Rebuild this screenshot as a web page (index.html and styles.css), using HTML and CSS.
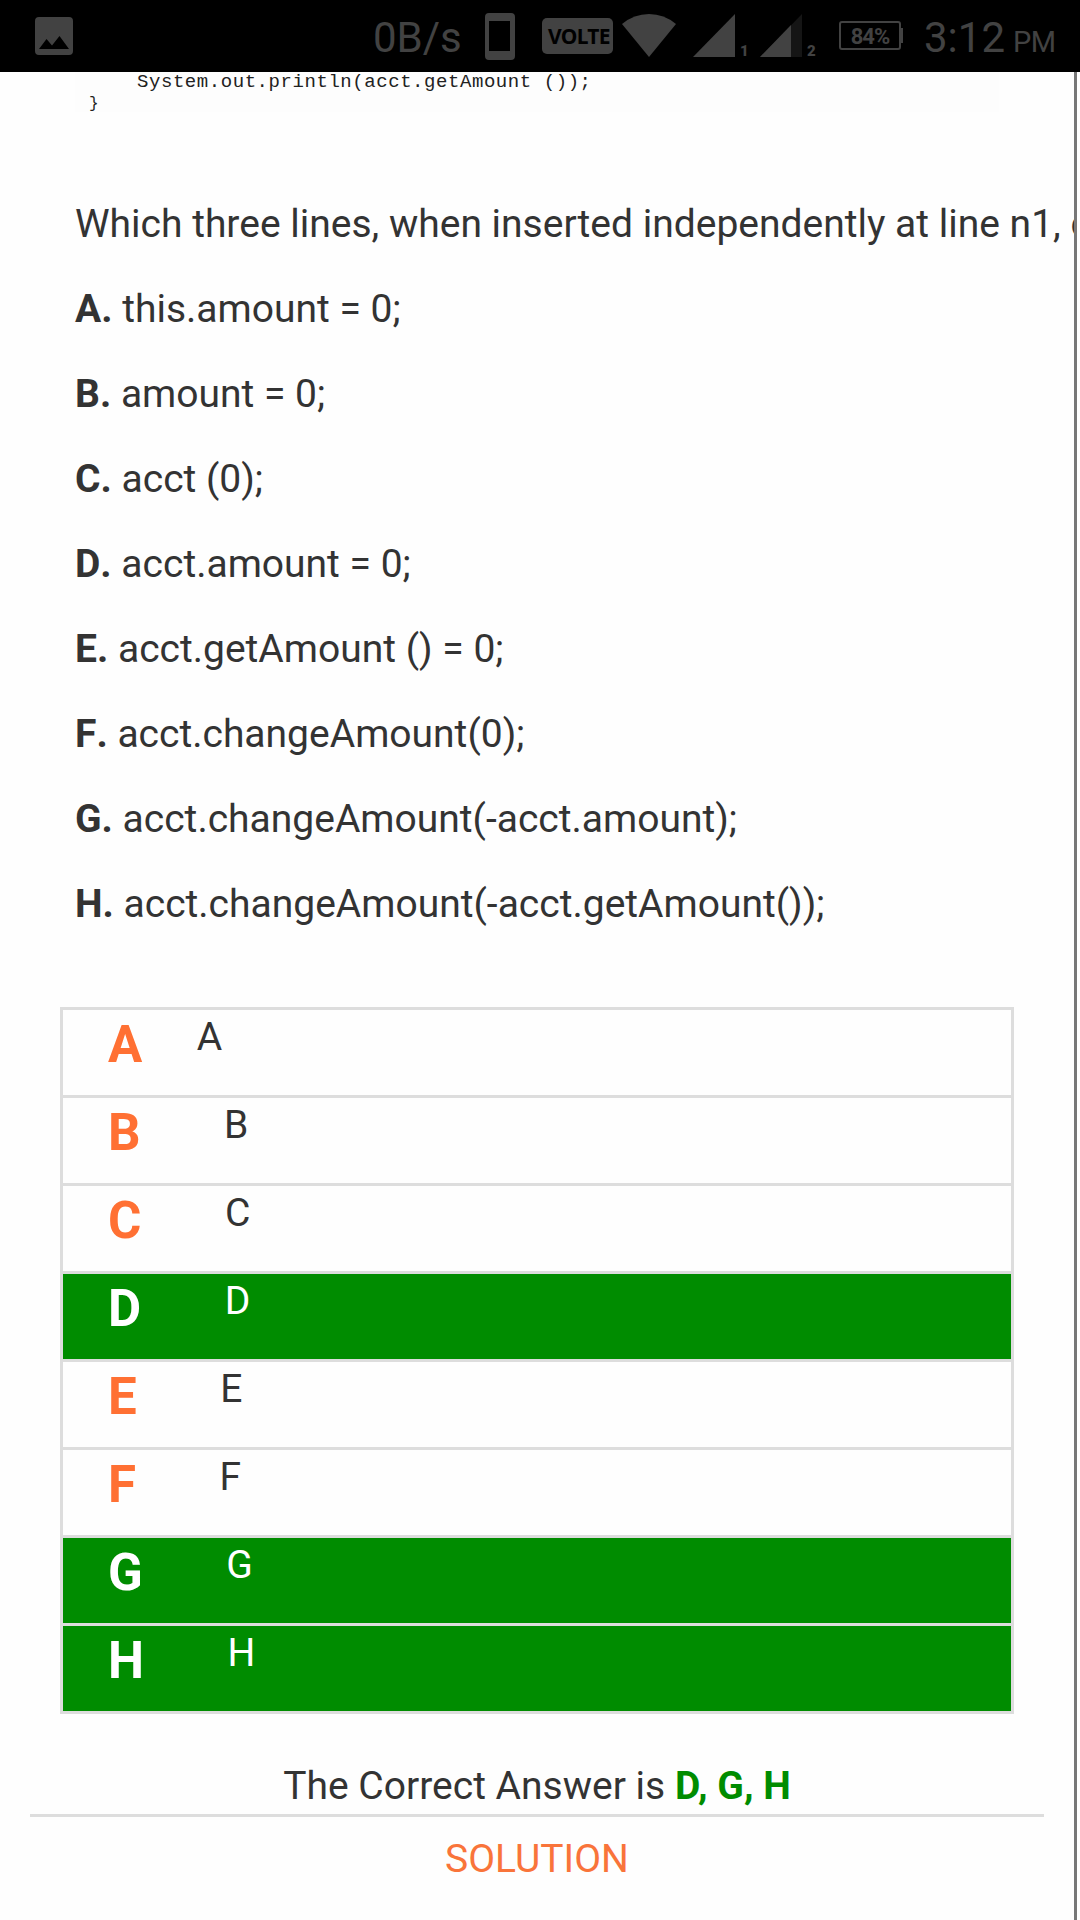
FILE: index.html
```html
<!DOCTYPE html>
<html lang="en">
<head>
<meta charset="utf-8">
<title>Quiz</title>
<link rel="stylesheet" href="styles.css">
</head>
<body>
<header class="status">
  <svg class="ic-image" width="38" height="38" viewBox="0 0 38 38"><path fill="#424242" fill-rule="evenodd" d="M4 0h30a4 4 0 0 1 4 4v30a4 4 0 0 1-4 4H4a4 4 0 0 1-4-4V4a4 4 0 0 1 4-4zM4 32h30L24.500 19l-7.500 9.500L11.500 22z"/></svg>
  <span class="speed">0B/s</span>
  <svg class="ic-phone" width="30" height="48" viewBox="0 0 30 48"><path fill="#424242" fill-rule="evenodd" d="M4 0h22a4 4 0 0 1 4 4v39a4 4 0 0 1-4 4H4a4 4 0 0 1-4-4V4a4 4 0 0 1 4-4zM4 8v30h21V8z"/></svg>
  <span class="volte">VOLTE</span>
  <svg class="ic-wifi" width="54" height="43" viewBox="0 0 54 43"><path fill="#424242" d="M0 10Q12 0 27 0T54 10L27 43z"/></svg>
  <svg class="ic-sig1" width="42" height="43" viewBox="0 0 42 43"><path fill="#424242" d="M42 0v43H0z"/></svg>
  <span class="sim">1</span>
  <svg class="ic-sig2" width="42" height="43" viewBox="0 0 42 43"><path fill="#151515" d="M42 0v43H0z"/><path fill="#424242" d="M31 11v32H0z"/></svg>
  <span class="sim">2</span>
  <span class="battery">84%</span>
  <span class="nub"></span>
  <span class="clock">3:12</span>
  <span class="ampm">PM</span>
</header>
<main class="page">
  <div class="code">
    <div class="call">System.out.println(acct.getAmount ());</div>
    <div class="brace">}</div>
  </div>
  <section class="question">
    <p>Which three lines, when inserted independently at line n1, c</p>
    <p><b>A.</b> this.amount = 0;</p>
    <p><b>B.</b> amount = 0;</p>
    <p><b>C.</b> acct (0);</p>
    <p><b>D.</b> acct.amount = 0;</p>
    <p><b>E.</b> acct.getAmount () = 0;</p>
    <p><b>F.</b> acct.changeAmount(0);</p>
    <p><b>G.</b> acct.changeAmount(-acct.amount);</p>
    <p><b>H.</b> acct.changeAmount(-acct.getAmount());</p>
  </section>
  <ul class="options">
    <li class="first"><b>A</b><span>A</span></li>
    <li><b>B</b><span>B</span></li>
    <li><b>C</b><span>C</span></li>
    <li class="correct"><b>D</b><span>D</span></li>
    <li><b>E</b><span>E</span></li>
    <li><b>F</b><span>F</span></li>
    <li class="correct"><b>G</b><span>G</span></li>
    <li class="correct"><b>H</b><span>H</span></li>
  </ul>
  <p class="answer">The Correct Answer is <b>D, G, H</b></p>
  <div class="solution">SOLUTION</div>
</main>
</body>
</html>
```
FILE: styles.css
```css
* { box-sizing: border-box; }
body {
  margin: 0;
  height: 1920px;
  overflow: hidden;
  background: #fff;
  color: #333;
  font-family: Roboto, sans-serif;
  font-size: 39px;
  line-height: 56px;
}
.status {
  display: flex;
  align-items: flex-start;
  height: 72px;
  background: #000;
  color: #424242;
  white-space: nowrap;
}
.status > * { flex: none; }
.ic-image { margin: 17px 0 0 35px; }
.speed { width: 112px; margin: 10px 0 0 300px; font-size: 42px; }
.ic-phone { margin-top: 13px; }
.volte {
  width: 71px;
  height: 36px;
  margin: 18px 0 0 27px;
  padding-left: 6px;
  border-radius: 5px;
  background: #424242;
  color: #000;
  font-family: "Noto Sans", sans-serif;
  font-size: 21px;
  font-weight: 700;
  letter-spacing: -0.7px;
  line-height: 36px;
}
.ic-wifi { margin: 14px 0 0 9px; }
.ic-sig1 { margin: 14px 0 0 17px; }
.sim { width: 19px; margin: 41px 0 0 5px; font-size: 15px; font-weight: 900; line-height: 20px; }
.ic-sig2 { margin: 14px 0 0 1px; }
.sim + .battery { margin-left: 13px; }
.battery {
  width: 62px;
  height: 29px;
  margin-top: 21px;
  border: 2px solid #424242;
  border-radius: 3px;
  font-size: 22px;
  font-weight: 700;
  letter-spacing: -1px;
  line-height: 28px;
  text-align: center;
}
.nub { width: 2px; height: 15px; margin-top: 28px; background: #424242; }
.clock { width: 90px; margin: 10px 0 0 21px; font-size: 42px; }
.ampm { margin: 14px 0 0 -1px; font-size: 29px; letter-spacing: -0.5px; }

.page {
  width: 1077px;
  height: 1848px;
  border-right: 3px solid #777;
  background: #fefefe;
  overflow: hidden;
}
.code {
  width: 924px;
  height: 40px;
  padding-left: 62px;
  margin-left: 75px;
  background: #fdfdfd;
  color: #222;
  font: 19px/20px "Liberation Mono", monospace;
  letter-spacing: 0.56px;
  white-space: nowrap;
}
.code .brace { margin: 2px 0 0 -48px; font-size: 16px; }
.question { padding: 84px 0 0 75px; white-space: nowrap; }
.question p { margin: 0 0 29px; }
.question b { font-kerning: none; }
.options {
  width: 954px;
  margin: 75px 0 0 60px;
  padding: 0;
  border: 3px solid #ddd;
  list-style: none;
}
.options li { display: flex; align-items: flex-start; height: 85px; padding-left: 45px; }
.options li + li { height: 88px; border-top: 3px solid #ddd; }
.options b { margin-top: 7px; color: #ff7033; font-size: 51px; }
.options span { margin: -1px 0 0 83.5px; }
.options .first span { margin-left: 54.5px; }
.options .correct { background: #008c00; color: #fff; }
.options .correct b { color: #fff; }
.answer {
  width: 1014px;
  height: 59px;
  margin: 44px 0 0 30px;
  border-bottom: 3px solid #ddd;
  text-align: center;
}
.answer b { color: #008c00; }
.solution { margin-top: 14px; color: #f9743a; text-align: center; }
```
